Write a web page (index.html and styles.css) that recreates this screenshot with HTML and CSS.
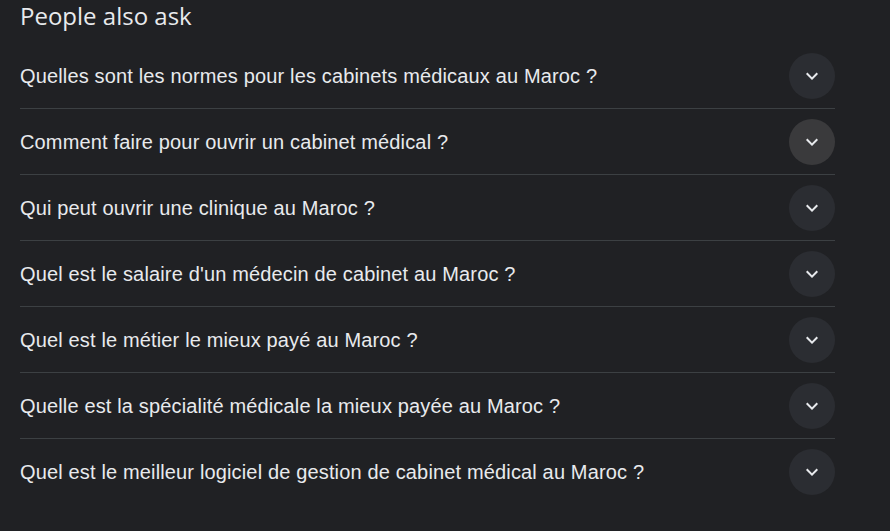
FILE: index.html
```html
<!DOCTYPE html>
<html lang="fr">
<head>
<meta charset="utf-8">
<link rel="stylesheet" href="styles.css">
</head>
<body>
<div class="paa">
  <h2 class="title">People also ask</h2>
  <div class="list">
    <div class="row"><span class="q">Quelles sont les normes pour les cabinets médicaux au Maroc ?</span><span class="btn"><svg viewBox="0 0 24 24" width="24" height="24"><path d="M16.59 8.59L12 13.17 7.41 8.59 6 10l6 6 6-6z"/></svg></span></div>
    <div class="row"><span class="q">Comment faire pour ouvrir un cabinet médical ?</span><span class="btn hover"><svg viewBox="0 0 24 24" width="24" height="24"><path d="M16.59 8.59L12 13.17 7.41 8.59 6 10l6 6 6-6z"/></svg></span></div>
    <div class="row"><span class="q">Qui peut ouvrir une clinique au Maroc ?</span><span class="btn"><svg viewBox="0 0 24 24" width="24" height="24"><path d="M16.59 8.59L12 13.17 7.41 8.59 6 10l6 6 6-6z"/></svg></span></div>
    <div class="row"><span class="q">Quel est le salaire d'un médecin de cabinet au Maroc ?</span><span class="btn"><svg viewBox="0 0 24 24" width="24" height="24"><path d="M16.59 8.59L12 13.17 7.41 8.59 6 10l6 6 6-6z"/></svg></span></div>
    <div class="row"><span class="q">Quel est le métier le mieux payé au Maroc ?</span><span class="btn"><svg viewBox="0 0 24 24" width="24" height="24"><path d="M16.59 8.59L12 13.17 7.41 8.59 6 10l6 6 6-6z"/></svg></span></div>
    <div class="row"><span class="q">Quelle est la spécialité médicale la mieux payée au Maroc ?</span><span class="btn"><svg viewBox="0 0 24 24" width="24" height="24"><path d="M16.59 8.59L12 13.17 7.41 8.59 6 10l6 6 6-6z"/></svg></span></div>
    <div class="row last"><span class="q">Quel est le meilleur logiciel de gestion de cabinet médical au Maroc ?</span><span class="btn"><svg viewBox="0 0 24 24" width="24" height="24"><path d="M16.59 8.59L12 13.17 7.41 8.59 6 10l6 6 6-6z"/></svg></span></div>
  </div>
</div>
</body>
</html>
```
FILE: styles.css
```css
html, body {
  margin: 0;
  padding: 0;
  background: #202124;
  height: 100%;
}
body {
  font-family: "Liberation Sans", Arial, sans-serif;
  color: #e8eaed;
}
.paa {
  width: 815px;
  padding: 0 0 0 20px;
}
.title {
  margin: 0;
  height: 43px;
  font-family: "Open Sans", "Liberation Sans", sans-serif;
  font-weight: 400;
  font-size: 24px;
  line-height: 32px;
  color: #e8eaed;
}
.row {
  display: flex;
  align-items: center;
  justify-content: space-between;
  height: 65px;
  border-bottom: 1px solid #3c4043;
}
.row.last {
  border-bottom: none;
}
.q {
  font-size: 20px;
  line-height: 26px;
  letter-spacing: 0.15px;
  color: #e8eaed;
}
.btn {
  width: 46px;
  height: 46px;
  border-radius: 50%;
  background: #2b2d32;
  display: flex;
  align-items: center;
  justify-content: center;
}
.btn.hover {
  background: #3a3a3c;
}
.btn svg {
  fill: #e8eaed;
}
```
